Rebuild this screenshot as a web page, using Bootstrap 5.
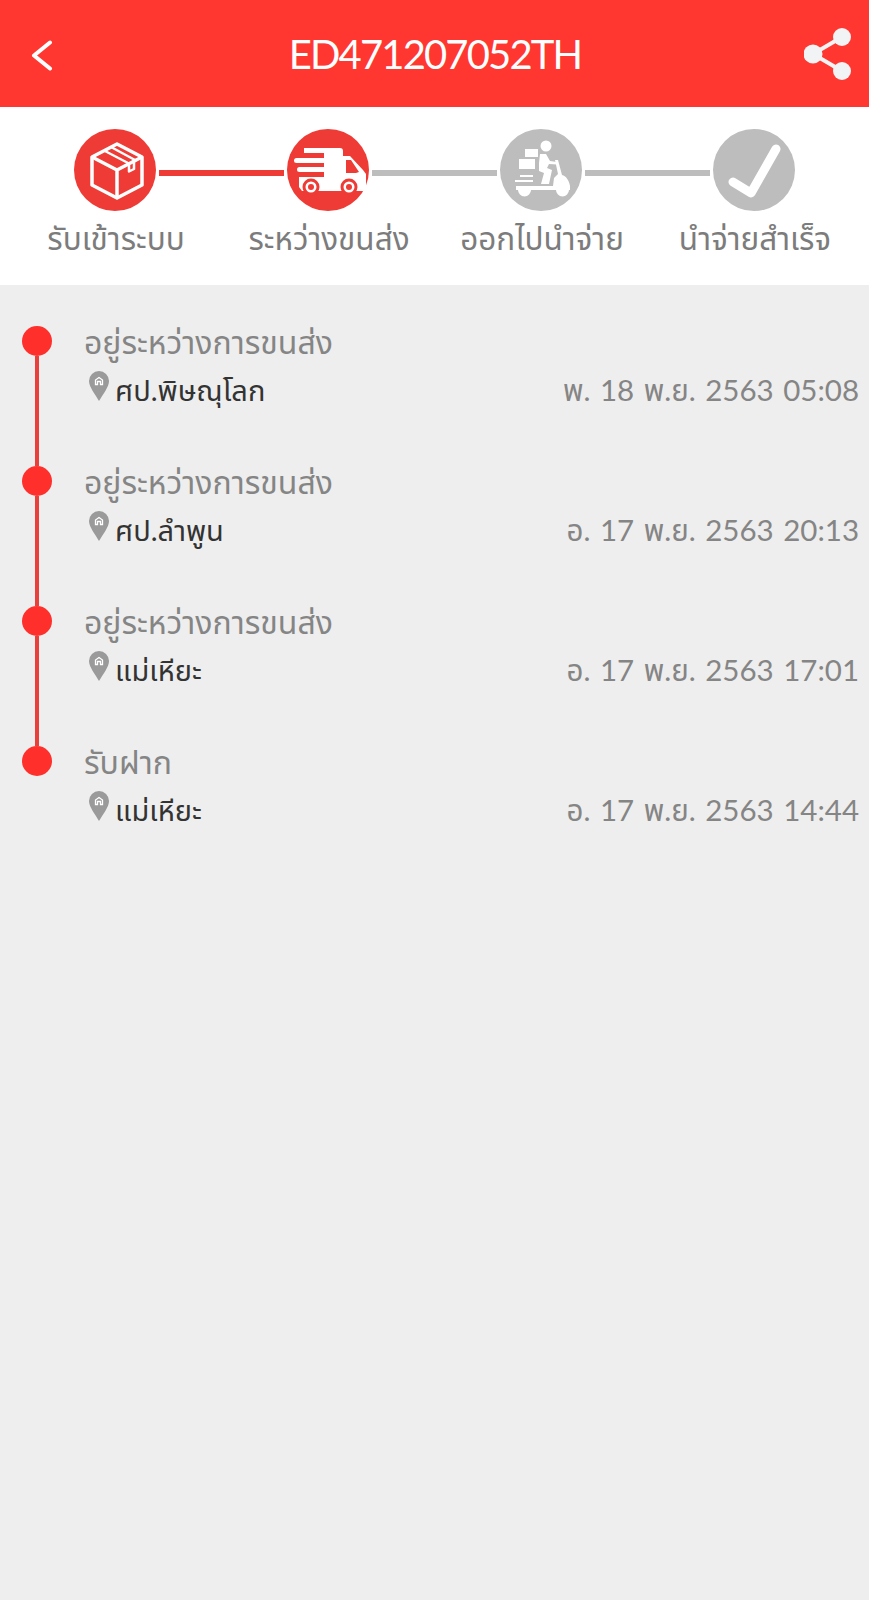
<!DOCTYPE html>
<html lang="th">
<head>
<meta charset="UTF-8">
<title>ED471207052TH</title>
<meta name="viewport" content="width=device-width, initial-scale=1.0">
<link href="https://cdn.jsdelivr.net/npm/bootstrap@5.3.0/dist/css/bootstrap.min.css" rel="stylesheet">
<style>
    body {
        font-family: "Lato", "Noto Sans", "Noto Sans Thai", sans-serif;
        background-color: #eeeeee;
        min-height: 1600px;
    }
    .top-bar {
        height: 107px;
        background-color: #ff3730;
        color: #fff;
        padding: 0 17px 0 30px;
    }
    .top-title { font-size: 40px; line-height: 1; font-weight: 400; letter-spacing: -1.85px; }
    .top-icon { flex: none; }
    .steps-panel {
        height: 178px;
        padding: 22px 8px 0;
    }
    .step-item { width: 213px; flex: none; }
    .step-head { height: 82px; }
    .step-circle { width: 82px; height: 82px; flex: none; display: block; }
    .step-link { height: 6px; flex: 1 1 0; margin: 6px 3px 0; background-color: #bdbdbd; }
    .step-link:first-child { margin-left: 0; }
    .step-link:last-child { margin-right: 0; }
    .step-link.is-on { background-color: #ef3b35; }
    .step-link.is-none { background: transparent; }
    .step-label { font-size: 31.5px; line-height: 36px; color: #7c7c7c; margin-top: 9px; padding-left: 3px; white-space: nowrap; }
    .track-list { padding: 41px 10px 0 22px; }
    .track-row { height: 140px; }
    .track-rail { width: 30px; flex: none; }
    .track-dot { width: 30px; height: 30px; border-radius: 50%; background-color: #ff2f2b; flex: none; }
    .track-line { width: 4px; flex: 1 1 0; background-color: #e8413c; }
    .track-body { padding-left: 32px; min-width: 0; }
    .track-status { font-size: 32px; line-height: 36px; color: #858585; margin-top: -2px; }
    .track-info { margin-top: 12px; padding-left: 5px; }
    .track-pin { width: 20px; height: 30px; flex: none; margin-top: -1px; }
    .track-place { font-size: 29px; line-height: 36px; color: #333; padding-left: 6px; }
    .track-date { font-size: 29.5px; line-height: 36px; color: #858585; word-spacing: 2px; white-space: nowrap; }
</style>
</head>
<body>
    <header class="top-bar d-flex align-items-center justify-content-between">
        <svg class="top-icon" width="36" height="34" viewBox="0 0 36 34" fill="none" stroke="#fff" stroke-width="4" stroke-linecap="round" stroke-linejoin="round">
            <path d="M20 5.500 4 18.500l16 13"/>
        </svg>
        <div class="top-title">ED471207052TH</div>
        <svg class="top-icon" width="48" height="54" viewBox="0 0 48 54" fill="#f2f3f4" stroke="#f2f3f4">
            <path d="M38 10 9 27l29 17" fill="none" stroke-width="4"/>
            <circle cx="38" cy="10" r="9" stroke="none"/>
            <circle cx="9" cy="27" r="9.500" stroke="none"/>
            <circle cx="38" cy="44" r="9" stroke="none"/>
        </svg>
    </header>

    <section class="steps-panel bg-white d-flex">
        <div class="step-item text-center">
            <div class="step-head d-flex align-items-center">
                <span class="step-link is-none"></span>
                <svg class="step-circle" viewBox="0 0 82 82">
                    <circle cx="41" cy="41" r="41" fill="#ef3b35"/>
                    <g fill="none" stroke="#fff" stroke-width="3.500" stroke-linejoin="round">
                        <path d="M43 15 18 28v28l25 13 25-13V28z"/>
                        <path d="M18 28l25 13 25-13M43 41v28"/>
                    </g>
                    <g fill="none" stroke="#fff" stroke-width="2.500" stroke-linejoin="round">
                        <path d="M30 21.500l25 13M37 18l24 13M55 34.500v8l5-2.500v-9"/>
                    </g>
                </svg>
                <span class="step-link is-on"></span>
            </div>
            <div class="step-label">รับเข้าระบบ</div>
        </div>
        <div class="step-item text-center">
            <div class="step-head d-flex align-items-center">
                <span class="step-link is-on"></span>
                <svg class="step-circle" viewBox="0 0 82 82">
                    <circle cx="41" cy="41" r="41" fill="#ef3b35"/>
                    <path fill="#fff" d="M17 19h36a3 3 0 0 1 3 3v5h7l13 14 3 4v14a3 3 0 0 1-3 3H15l-3-4V48h25V24H17z"/>
                    <path fill="#ef3b35" d="M59 31h5l8 12-3 1H59z"/>
                    <rect x="7" y="29" width="32" height="5" rx="2.500" fill="#fff"/>
                    <rect x="10" y="38" width="29" height="5" rx="2.500" fill="#fff"/>
                    <circle cx="24" cy="58" r="7" fill="#fff" stroke="#ef3b35" stroke-width="3"/>
                    <circle cx="24" cy="58" r="3" fill="#ef3b35"/>
                    <circle cx="62" cy="58" r="7" fill="#fff" stroke="#ef3b35" stroke-width="3"/>
                    <circle cx="62" cy="58" r="3" fill="#ef3b35"/>
                </svg>
                <span class="step-link is-off"></span>
            </div>
            <div class="step-label">ระหว่างขนส่ง</div>
        </div>
        <div class="step-item text-center">
            <div class="step-head d-flex align-items-center">
                <span class="step-link is-off"></span>
                <svg class="step-circle" viewBox="0 0 82 82">
                    <circle cx="41" cy="41" r="41" fill="#bdbdbd"/>
                    <circle cx="46" cy="17" r="5.500" fill="#fff"/>
                    <path fill="#fff" d="M25 20h13v8H25zM19 30h16v10H19z"/>
                    <path fill="#fff" d="M40 25h6l4 7 7 1v2.500l-8-.5-2 4 5 2-3 14h-8l3-11-5-2v-8z"/>
                    <path fill="#fff" d="M55 31h3l4 15c4 1 7 5 8 11H53l1-8 4-4z"/>
                    <path fill="#fff" d="M15 51h18v2H15zM20 46h13v2H20zM16 57h54v4H16z"/>
                    <path fill="#fff" d="M18 61h13a6.500 6.500 0 0 1-13 0zM56 61h13a6.500 6.500 0 0 1-13 0z"/>
                </svg>
                <span class="step-link is-off"></span>
            </div>
            <div class="step-label">ออกไปนำจ่าย</div>
        </div>
        <div class="step-item text-center">
            <div class="step-head d-flex align-items-center">
                <span class="step-link is-off"></span>
                <svg class="step-circle" viewBox="0 0 82 82">
                    <circle cx="41" cy="41" r="41" fill="#bdbdbd"/>
                    <path d="M20 53l18 11 25-44" fill="none" stroke="#fff" stroke-width="9" stroke-linecap="round" stroke-linejoin="round"/>
                </svg>
                <span class="step-link is-none"></span>
            </div>
            <div class="step-label">นำจ่ายสำเร็จ</div>
        </div>
    </section>

    <main class="track-list">
        <div class="track-row d-flex">
            <div class="track-rail d-flex flex-column align-items-center"><span class="track-dot"></span><span class="track-line"></span></div>
            <div class="track-body flex-grow-1">
                <div class="track-status">อยู่ระหว่างการขนส่ง</div>
                <div class="track-info d-flex justify-content-between">
                    <div class="d-flex">
                        <svg class="track-pin" viewBox="0 0 20 30"><path fill="#9a9a9a" d="M10 0a10 10 0 0 1 10 10c0 6-6 13-10 20C6 23 0 16 0 10A10 10 0 0 1 10 0z"/><path fill="none" stroke="#fff" stroke-width="1.300" d="M6.500 13.500V9L10 6.500 13.500 9v4.500h-2v-3h-3v3z"/></svg>
                        <span class="track-place">ศป.พิษณุโลก</span>
                    </div>
                    <span class="track-date">พ. 18 พ.ย. 2563 05:08</span>
                </div>
            </div>
        </div>
        <div class="track-row d-flex">
            <div class="track-rail d-flex flex-column align-items-center"><span class="track-dot"></span><span class="track-line"></span></div>
            <div class="track-body flex-grow-1">
                <div class="track-status">อยู่ระหว่างการขนส่ง</div>
                <div class="track-info d-flex justify-content-between">
                    <div class="d-flex">
                        <svg class="track-pin" viewBox="0 0 20 30"><path fill="#9a9a9a" d="M10 0a10 10 0 0 1 10 10c0 6-6 13-10 20C6 23 0 16 0 10A10 10 0 0 1 10 0z"/><path fill="none" stroke="#fff" stroke-width="1.300" d="M6.500 13.500V9L10 6.500 13.500 9v4.500h-2v-3h-3v3z"/></svg>
                        <span class="track-place">ศป.ลำพูน</span>
                    </div>
                    <span class="track-date">อ. 17 พ.ย. 2563 20:13</span>
                </div>
            </div>
        </div>
        <div class="track-row d-flex">
            <div class="track-rail d-flex flex-column align-items-center"><span class="track-dot"></span><span class="track-line"></span></div>
            <div class="track-body flex-grow-1">
                <div class="track-status">อยู่ระหว่างการขนส่ง</div>
                <div class="track-info d-flex justify-content-between">
                    <div class="d-flex">
                        <svg class="track-pin" viewBox="0 0 20 30"><path fill="#9a9a9a" d="M10 0a10 10 0 0 1 10 10c0 6-6 13-10 20C6 23 0 16 0 10A10 10 0 0 1 10 0z"/><path fill="none" stroke="#fff" stroke-width="1.300" d="M6.500 13.500V9L10 6.500 13.500 9v4.500h-2v-3h-3v3z"/></svg>
                        <span class="track-place">แม่เหียะ</span>
                    </div>
                    <span class="track-date">อ. 17 พ.ย. 2563 17:01</span>
                </div>
            </div>
        </div>
        <div class="track-row d-flex">
            <div class="track-rail d-flex flex-column align-items-center"><span class="track-dot"></span></div>
            <div class="track-body flex-grow-1">
                <div class="track-status">รับฝาก</div>
                <div class="track-info d-flex justify-content-between">
                    <div class="d-flex">
                        <svg class="track-pin" viewBox="0 0 20 30"><path fill="#9a9a9a" d="M10 0a10 10 0 0 1 10 10c0 6-6 13-10 20C6 23 0 16 0 10A10 10 0 0 1 10 0z"/><path fill="none" stroke="#fff" stroke-width="1.300" d="M6.500 13.500V9L10 6.500 13.500 9v4.500h-2v-3h-3v3z"/></svg>
                        <span class="track-place">แม่เหียะ</span>
                    </div>
                    <span class="track-date">อ. 17 พ.ย. 2563 14:44</span>
                </div>
            </div>
        </div>
    </main>

    <script src="https://cdn.jsdelivr.net/npm/bootstrap@5.3.0/dist/js/bootstrap.bundle.min.js"></script>
</body>
</html>
